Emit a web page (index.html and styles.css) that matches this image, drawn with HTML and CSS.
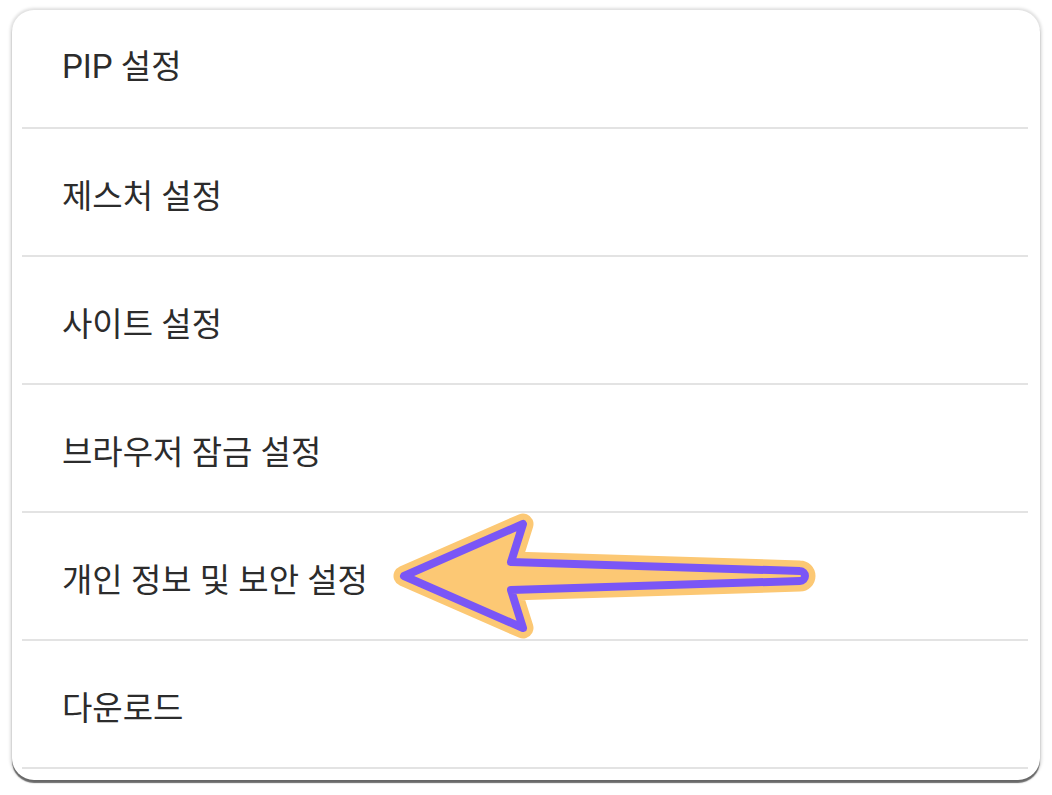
FILE: index.html
```html
<!DOCTYPE html>
<html lang="ko">
<head>
<meta charset="utf-8">
<link rel="stylesheet" href="styles.css">
</head>
<body>
<div class="page">
  <div class="card">
    <div class="row first"><span class="label">PIP 설정</span></div>
    <div class="row"><span class="label">제스처 설정</span></div>
    <div class="row"><span class="label">사이트 설정</span></div>
    <div class="row"><span class="label">브라우저 잠금 설정</span></div>
    <div class="row"><span class="label">개인 정보 및 보안 설정</span></div>
    <div class="row"><span class="label">다운로드</span></div>
  </div>
  <svg class="arrow" width="1052" height="795" viewBox="0 0 1052 795">
    <path d="M404 576 L523 524 L511 562 L800 571 A5 5 0 0 1 800 581 L511 590 L523 628 Z" fill="#fcc874" stroke="#fcc874" stroke-width="21" stroke-linejoin="round"/>
    <path d="M404 576 L523 524 L511 562 L800 571 A5 5 0 0 1 800 581 L511 590 L523 628 Z" fill="#fcc874" stroke="#7a56f6" stroke-width="8" stroke-linejoin="round"/>
  </svg>
</div>
</body>
</html>
```
FILE: styles.css
```css
html, body {
  margin: 0;
  padding: 0;
  background: #ffffff;
}
.page {
  position: relative;
  width: 1052px;
  height: 795px;
  overflow: hidden;
  padding-top: 10px;
  box-sizing: border-box;
}
.card {
  margin-left: 12px;
  width: 1028px;
  height: 770px;
  background: #ffffff;
  border-radius: 22px;
  box-shadow: 0 3px 1px rgba(0,0,0,0.55), 0 0 3px 2px rgba(0,0,0,0.13);
  overflow: hidden;
  font-family: Roboto, "Noto Sans CJK KR", sans-serif;
}
.row {
  height: 128px;
  box-sizing: border-box;
  margin: 0 12px 0 10px;
  border-bottom: 2px solid #e3e3e3;
  display: flex;
  align-items: center;
  padding-left: 40px;
  padding-top: 8px;
}
.row.first {
  height: 119px;
  padding-top: 0;
  padding-bottom: 4px;
}
.label {
  font-size: 33px;
  color: #2c2c2c;
  line-height: 1;
}
.arrow {
  position: absolute;
  left: 0;
  top: 0;
}
```
